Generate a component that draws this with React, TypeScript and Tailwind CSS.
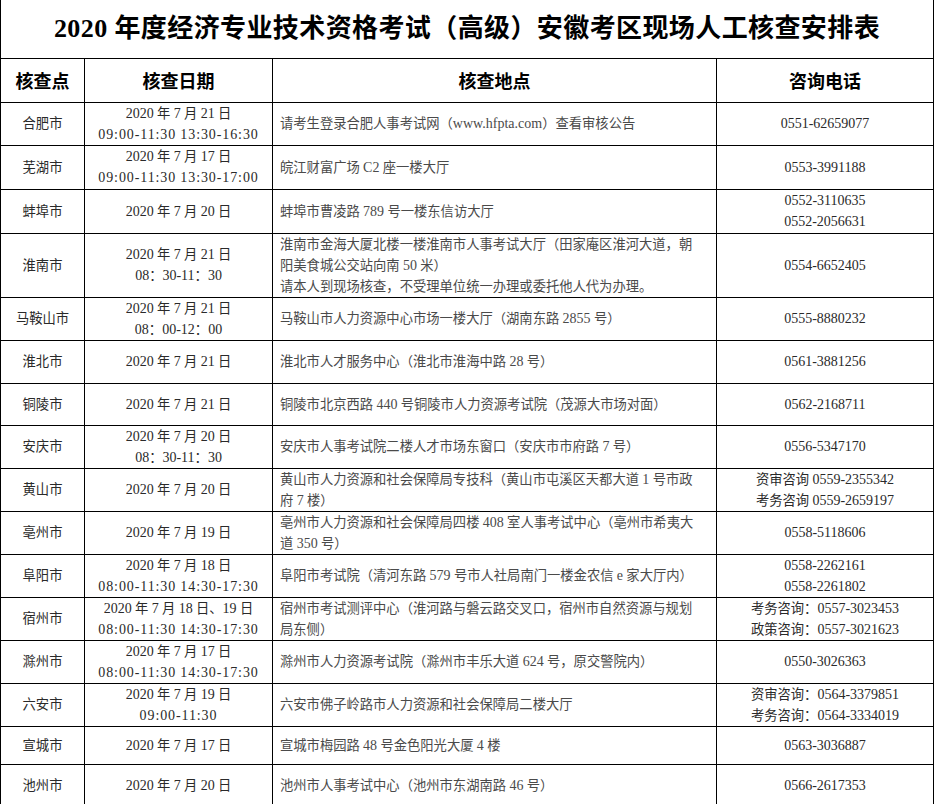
/**
 * 2020 年度经济专业技术资格考试（高级）安徽考区现场人工核查安排表
 * 静态表格，行高按原图逐行给定。
 */

type Row = {
  city: string
  date: string[]
  place: string[]
  phone: string[]
  h: number
}

const rows: Row[] = [
  { city: '合肥市', date: ['2020 年 7 月 21 日', '09:00-11:30 13:30-16:30'], place: ['请考生登录合肥人事考试网（www.hfpta.com）查看审核公告'], phone: ['0551-62659077'], h: 42 },
  { city: '芜湖市', date: ['2020 年 7 月 17 日', '09:00-11:30 13:30-17:00'], place: ['皖江财富广场 C2 座一楼大厅'], phone: ['0553-3991188'], h: 44 },
  { city: '蚌埠市', date: ['2020 年 7 月 20 日'], place: ['蚌埠市曹凌路 789 号一楼东信访大厅'], phone: ['0552-3110635', '0552-2056631'], h: 44 },
  {
    city: '淮南市',
    date: ['2020 年 7 月 21 日', '08：30-11：30'],
    place: [
      '淮南市金海大厦北楼一楼淮南市人事考试大厅（田家庵区淮河大道，朝',
      '阳美食城公交站向南 50 米）',
      '请本人到现场核查，不受理单位统一办理或委托他人代为办理。',
    ],
    phone: ['0554-6652405'],
    h: 64,
  },
  { city: '马鞍山市', date: ['2020 年 7 月 21 日', '08：00-12：00'], place: ['马鞍山市人力资源中心市场一楼大厅（湖南东路 2855 号）'], phone: ['0555-8880232'], h: 43 },
  { city: '淮北市', date: ['2020 年 7 月 21 日'], place: ['淮北市人才服务中心（淮北市淮海中路 28 号）'], phone: ['0561-3881256'], h: 43 },
  { city: '铜陵市', date: ['2020 年 7 月 21 日'], place: ['铜陵市北京西路 440 号铜陵市人力资源考试院（茂源大市场对面）'], phone: ['0562-2168711'], h: 42 },
  { city: '安庆市', date: ['2020 年 7 月 20 日', '08：30-11：30'], place: ['安庆市人事考试院二楼人才市场东窗口（安庆市市府路 7 号）'], phone: ['0556-5347170'], h: 43 },
  {
    city: '黄山市',
    date: ['2020 年 7 月 20 日'],
    place: ['黄山市人力资源和社会保障局专技科（黄山市屯溪区天都大道 1 号市政', '府 7 楼）'],
    phone: ['资审咨询 0559-2355342', '考务咨询 0559-2659197'],
    h: 43,
  },
  {
    city: '亳州市',
    date: ['2020 年 7 月 19 日'],
    place: ['亳州市人力资源和社会保障局四楼 408 室人事考试中心（亳州市希夷大', '道 350 号）'],
    phone: ['0558-5118606'],
    h: 42,
  },
  {
    city: '阜阳市',
    date: ['2020 年 7 月 18 日', '08:00-11:30 14:30-17:30'],
    place: ['阜阳市考试院（清河东路 579 号市人社局南门一楼金农信 e 家大厅内）'],
    phone: ['0558-2262161', '0558-2261802'],
    h: 43,
  },
  {
    city: '宿州市',
    date: ['2020 年 7 月 18 日、19 日', '08:00-11:30 14:30-17:30'],
    place: ['宿州市考试测评中心（淮河路与磐云路交叉口，宿州市自然资源与规划', '局东侧）'],
    phone: ['考务咨询：0557-3023453', '政策咨询：0557-3021623'],
    h: 43,
  },
  {
    city: '滁州市',
    date: ['2020 年 7 月 17 日', '08:00-11:30 14:30-17:30'],
    place: ['滁州市人力资源考试院（滁州市丰乐大道 624 号，原交警院内）'],
    phone: ['0550-3026363'],
    h: 41,
  },
  {
    city: '六安市',
    date: ['2020 年 7 月 19 日', '09:00-11:30'],
    place: ['六安市佛子岭路市人力资源和社会保障局二楼大厅'],
    phone: ['资审咨询：0564-3379851', '考务咨询：0564-3334019'],
    h: 43,
  },
  { city: '宣城市', date: ['2020 年 7 月 17 日'], place: ['宣城市梅园路 48 号金色阳光大厦 4 楼'], phone: ['0563-3036887'], h: 38 },
  { city: '池州市', date: ['2020 年 7 月 20 日'], place: ['池州市人事考试中心（池州市东湖南路 46 号）'], phone: ['0566-2617353'], h: 43 },
]

// 半角时间段在原图里是等宽排的，加点字距补上
const isTime = (s: string) => /^\d\d:\d\d/.test(s)

// 宋体里的西文数字比 Times 大一号，把半角片段单独放大
function Mixed({ text }: { text: string }) {
  const parts = text.split(/([\x21-\x7e]+)/)
  return (
    <>
      {parts.map((p, i) =>
        i % 2 === 1 ? (
          <span key={i} className="text-[14px]">{p}</span>
        ) : (
          <span key={i}>{p}</span>
        ),
      )}
    </>
  )
}

export default function App() {
  return (
    <div className="bg-white w-[939px] h-[804px] overflow-hidden font-['Liberation_Serif','Noto_Sans_CJK_SC',serif]">
      <table className="w-[933px] table-fixed border-collapse">
        <colgroup>
          <col className="w-[84px]" />
          <col className="w-[188px]" />
          <col className="w-[444px]" />
          <col className="w-[217px]" />
        </colgroup>
        <thead>
          <tr className="h-[58px]">
            <th
              colSpan={4}
              className="border-x border-b border-black p-0 text-center text-[26px] font-bold text-black tracking-[0.4px]"
            >
              2020 年度经济专业技术资格考试（高级）安徽考区现场人工核查安排表
            </th>
          </tr>
          <tr className="h-[44px] font-['Noto_Sans_CJK_SC',sans-serif] text-[18px] font-bold text-black">
            <th className="border border-black p-0 text-center">核查点</th>
            <th className="border border-black p-0 text-center">核查日期</th>
            <th className="border border-black p-0 text-center">核查地点</th>
            <th className="border border-black p-0 text-center">咨询电话</th>
          </tr>
        </thead>
        <tbody className="text-[13.3px] leading-[21px]">
          {rows.map(r => (
            <tr key={r.city} style={{ height: r.h }}>
              <td className="border border-black p-0 text-center text-[#2a2a2a]">{r.city}</td>
              <td className="border border-black p-0 text-center text-[#2a2a2a]">
                {r.date.map(d => (
                  <div key={d} className={isTime(d) ? 'tracking-[0.9px]' : ''}>
                    <Mixed text={d} />
                  </div>
                ))}
              </td>
              <td className="border border-black py-0 pl-[7px] pr-1 text-left text-[#4a4a4a] whitespace-nowrap">
                {r.place.map(p => (
                  <div key={p}>
                    <Mixed text={p} />
                  </div>
                ))}
              </td>
              <td className="border border-black p-0 text-center text-[#2a2a2a]">
                {r.phone.map(p => (
                  <div key={p}>
                    <Mixed text={p} />
                  </div>
                ))}
              </td>
            </tr>
          ))}
        </tbody>
      </table>
    </div>
  )
}
